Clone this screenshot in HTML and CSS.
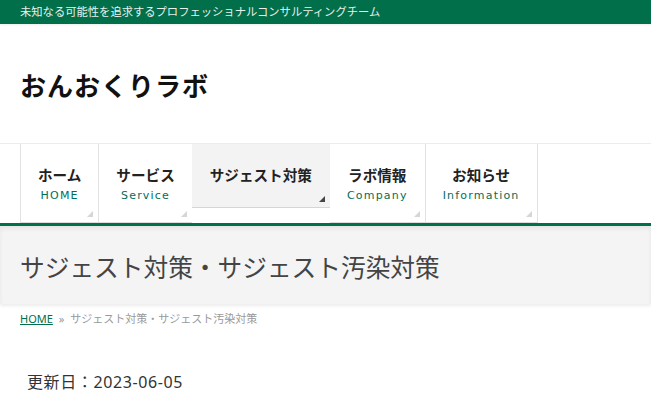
FILE: index.html
```html
<!DOCTYPE html>
<html lang="ja">

<head>
    <meta charset="utf-8">
    <title>サジェスト対策・サジェスト汚染対策 | おんおくりラボ</title>
    <link rel="stylesheet" href="styles.css">
</head>

<body>
    <div class="top-bar">
        <p class="tagline">未知なる可能性を追求するプロフェッショナルコンサルティングチーム</p>
    </div>

    <header class="site-header">
        <p class="logo">おんおくりラボ</p>
    </header>

    <nav class="global-nav">
        <ul class="nav-list">
            <li class="nav-item"><span class="nav-jp">ホーム</span><span class="nav-en">HOME</span></li>
            <li class="nav-item"><span class="nav-jp">サービス</span><span class="nav-en">Service</span></li>
            <li class="nav-item current"><span class="nav-jp">サジェスト対策</span></li>
            <li class="nav-item"><span class="nav-jp">ラボ情報</span><span class="nav-en">Company</span></li>
            <li class="nav-item"><span class="nav-jp">お知らせ</span><span class="nav-en">Information</span></li>
        </ul>
    </nav>

    <div class="page-title-band">
        <h1 class="page-title">サジェスト対策・サジェスト汚染対策</h1>
    </div>

    <div class="breadcrumb">
        <a href="#" class="crumb-home">HOME</a>
        <span class="crumb-sep">»</span>
        <span>サジェスト対策・サジェスト汚染対策</span>
    </div>

    <main class="content">
        <p class="updated">更新日：2023-06-05</p>
    </main>
</body>

</html>
```

FILE: styles.css
```css
body {
    margin: 0;
    background: #fff;
    color: #333;
    font-family: "Noto Sans", "Noto Sans CJK JP", sans-serif;
    overflow: hidden;
}

p,
h1,
ul {
    margin: 0;
    padding: 0;
}

.top-bar {
    background: #006f4a;
    height: 24px;
    padding: 0 20px;
    display: flex;
    align-items: center;
    box-shadow: 0 1px 2px rgba(0, 0, 0, 0.08);
}

.tagline {
    color: #e8f0ec;
    font-size: 11.3px;
    line-height: 1;
}

.site-header {
    height: 119px;
    padding: 0 20px;
    display: flex;
    align-items: center;
}

.logo {
    font-size: 26px;
    font-weight: bold;
    color: #111;
    letter-spacing: 1px;
    margin-top: 3px;
}

.global-nav {
    border-top: 1px solid #ececec;
    border-bottom: 3px solid #006f4a;
    padding: 0 20px;
}

.nav-list {
    list-style: none;
    display: flex;
    align-items: flex-start;
}

.nav-item {
    position: relative;
    height: 79px;
    padding: 20px 17px 0;
    border-left: 1px solid #e2e2e2;
    border-bottom: 1px solid #dcdcdc;
    display: flex;
    flex-direction: column;
    align-items: center;
    box-sizing: border-box;
}

.nav-item:last-child {
    border-right: 1px solid #e2e2e2;
}

.nav-item::after {
    content: "";
    position: absolute;
    right: 5px;
    bottom: 5px;
    border-style: solid;
    border-width: 0 0 6px 6px;
    border-color: transparent transparent #d6d6d6 transparent;
}

.nav-item.current {
    height: 64px;
    background: #f3f3f3;
    border-left: none;
    border-bottom: 1px solid #d6d6d6;
    padding: 20px 18px 0;
}

.nav-item.current::after {
    border-bottom-color: #444;
}

.current + .nav-item {
    border-left: none;
}

.nav-jp {
    font-size: 14.6px;
    font-weight: bold;
    color: #222;
    line-height: 22px;
}

.nav-en {
    font-family: "DejaVu Sans", sans-serif;
    font-size: 11px;
    letter-spacing: 1.2px;
    color: #006f5a;
    line-height: 14px;
    margin-top: 3px;
}

.page-title-band {
    background: #f4f4f4;
    height: 78px;
    padding: 0 20px;
    display: flex;
    align-items: center;
    box-shadow: inset 0 3px 4px rgba(0, 0, 0, 0.06), 0 2px 3px rgba(0, 0, 0, 0.08);
}

.page-title {
    font-size: 24.7px;
    font-weight: normal;
    color: #444;
    margin-top: 2px;
}

.breadcrumb {
    padding: 8px 20px 0;
    font-size: 11px;
    color: #999;
    line-height: 14px;
}

.crumb-home {
    color: #006f4a;
}

.crumb-sep {
    margin: 0 3px;
}

.content {
    padding: 43px 27px 0;
}

.updated {
    font-size: 16px;
    letter-spacing: 0.6px;
    color: #333;
}
```
